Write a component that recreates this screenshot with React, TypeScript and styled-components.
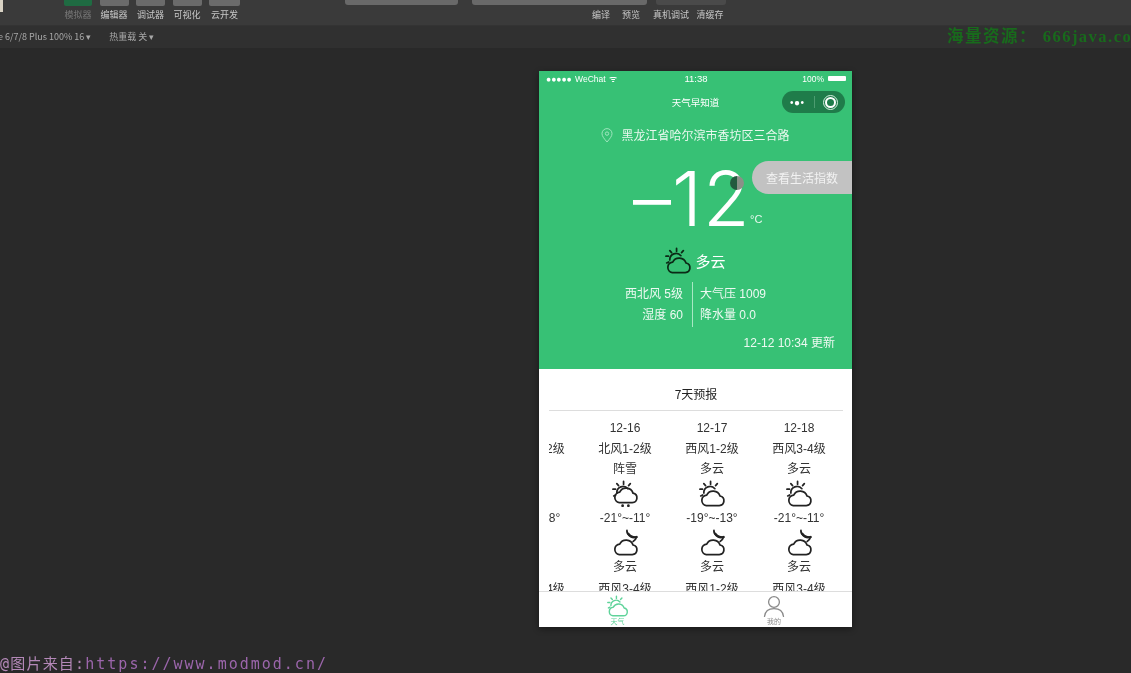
import styled, { createGlobalStyle } from 'styled-components';

const GlobalStyle = createGlobalStyle`
  html, body {
    margin: 0;
    padding: 0;
    width: 100%;
    height: 100%;
    overflow: hidden;
    background: #292929;
  }
`;

const CJK = `'Noto Sans CJK SC', 'Liberation Sans', sans-serif`;

const leftTools = [
  { label: '模拟器', width: 28, active: true },
  { label: '编辑器', width: 29 },
  { label: '调试器', width: 29 },
  { label: '可视化', width: 29 },
  { label: '云开发', width: 31 },
];

const rightTools = [
  { label: '编译', width: 30 },
  { label: '预览', width: 30 },
  { label: '真机调试', width: 50 },
  { label: '清缓存', width: 28 },
];

const forecast = [
  { date: '', wind: '西风1-2级', weather: '', temp: '-18°~-8°', night: '', nightWind: '西风3-4级', icon: 'none' },
  { date: '12-16', wind: '北风1-2级', weather: '阵雪', temp: '-21°~-11°', night: '多云', nightWind: '西风3-4级', icon: 'snow' },
  { date: '12-17', wind: '西风1-2级', weather: '多云', temp: '-19°~-13°', night: '多云', nightWind: '西风1-2级', icon: 'sun' },
  { date: '12-18', wind: '西风3-4级', weather: '多云', temp: '-21°~-11°', night: '多云', nightWind: '西风3-4级', icon: 'sun' },
];

const CLOUD = 'M7.5 26.5H21a5 5 0 0 0 .8-9.9A7.5 7.5 0 0 0 8 15.6a5.5 5.5 0 0 0-.5 10.9z';

function CloudSun({ size, color, snow }: { size: number; color: string; snow?: boolean }) {
  return (
    <svg width={size} height={size} viewBox="0 0 28 28" fill="none" stroke={color} strokeWidth="1.8" strokeLinecap="round" strokeLinejoin="round">
      <path d="M5 13.5a6.5 6.5 0 0 1 11.5-4.5" />
      <path d="M12 1.5v2.8M5 3.8l1.8 2M19 3.8l-1.8 2M1 9.5h2.6M1.8 16.5l2-1" />
      <path d={CLOUD} transform={snow ? 'translate(0 -3)' : undefined} />
      {snow && <path d="M11 26.5v.3M17 26.5v.3" strokeWidth="2.8" />}
    </svg>
  );
}

function CloudMoon({ size }: { size: number }) {
  return (
    <svg width={size} height={size} viewBox="0 0 28 28" fill="none" stroke="#222" strokeWidth="1.8" strokeLinecap="round" strokeLinejoin="round">
      <path d={CLOUD} />
      <path d="M15.5 1.5c-.4 3.8 3.2 7.5 10 6.8-.6 2-1.700 3.600-3.600 4.600" />
      <path d="M17 5c1.800 3 4.500 4.400 8.500 3.300" strokeWidth="2.400" />
    </svg>
  );
}

export default function App() {
  return (
    <Page>
      <GlobalStyle />
      <Toolbar>
        <ToolGroup>
          {leftTools.map(tool => (
            <Tool key={tool.label} $width={tool.width}>
              <ToolTile $active={tool.active} />
              <ToolLabel $muted={tool.active}>{tool.label}</ToolLabel>
            </Tool>
          ))}
        </ToolGroup>
        <Selects>
          <SelectBox $width={113} />
          <SelectBox $width={175} />
          <SelectBox $width={70} $dark />
        </Selects>
        <RightLabels>
          {rightTools.map(tool => (
            <RightLabel key={tool.label} $width={tool.width}>{tool.label}</RightLabel>
          ))}
        </RightLabels>
      </Toolbar>
      <SubBar>
        <SubItem>e 6/7/8 Plus 100% 16 ▾</SubItem>
        <SubItem>热重载 关 ▾</SubItem>
      </SubBar>
      <Watermark>海量资源： 666java.com</Watermark>
      <Stage>
        <Phone>
          <Hero>
            <StatusBar>
              <StatusSide>●●●●● WeChat ᯤ</StatusSide>
              <StatusTime>11:38</StatusTime>
              <StatusRight>
                100%
                <Battery />
              </StatusRight>
            </StatusBar>
            <NavBar>
              天气早知道
              <Capsule>
                <CapsuleDots>•●•</CapsuleDots>
                <CapsuleLine />
                <CapsuleRing />
              </Capsule>
            </NavBar>
            <Location>
              <svg width="12" height="15" viewBox="0 0 12 15" fill="none" stroke="#a8e8c4" strokeWidth="0.9">
                <path d="M6 14C3 10.500 1 8.200 1 5.600a5 5 0 0 1 10 0C11 8.200 9 10.500 6 14z" />
                <circle cx="6" cy="5.600" r="1.700" />
              </svg>
              <LocationText>黑龙江省哈尔滨市香坊区三合路</LocationText>
            </Location>
            <TempRow>
              <TempValue>–12</TempValue>
              <TempUnit>°C</TempUnit>
              <TouchDot />
              <IndexButton>查看生活指数</IndexButton>
            </TempRow>
            <WeatherRow>
              <CloudSun size={27} color="#0b2a16" />
              <WeatherName>多云</WeatherName>
            </WeatherRow>
            <Details>
              <DetailCol $right>
                <span>西北风 5级</span>
                <span>湿度 60</span>
              </DetailCol>
              <DetailCol>
                <span>大气压 1009</span>
                <span>降水量 0.0</span>
              </DetailCol>
            </Details>
            <Updated>12-12 10:34 更新</Updated>
          </Hero>
          <ForecastPanel>
            <ForecastTitle>7天预报</ForecastTitle>
            <Scroller>
              <Track>
                {forecast.map((day, i) => (
                  <DayCol key={i}>
                    <DayText>{day.date || '\u00a0'}</DayText>
                    <DayText>{day.wind}</DayText>
                    <DayText>{day.weather || '\u00a0'}</DayText>
                    <IconSlot>
                      {day.icon !== 'none' && <CloudSun size={27} color="#222" snow={day.icon === 'snow'} />}
                    </IconSlot>
                    <DayText>{day.temp}</DayText>
                    <IconSlot>{day.icon !== 'none' && <CloudMoon size={27} />}</IconSlot>
                    <DayText>{day.night || '\u00a0'}</DayText>
                    <LastLine>{day.nightWind}</LastLine>
                  </DayCol>
                ))}
              </Track>
            </Scroller>
          </ForecastPanel>
          <TabBar>
            <TabItem $active>
              <CloudSun size={22} color="#5fd39a" />
              <TabLabel>天气</TabLabel>
            </TabItem>
            <TabItem>
              <svg width="22" height="22" viewBox="0 0 22 22" fill="none" stroke="#8a8a8a" strokeWidth="1.300" strokeLinecap="round">
                <circle cx="11" cy="7" r="5.400" />
                <path d="M1.500 21.500c.6-5 4-7.800 9.500-7.800s8.900 2.800 9.500 7.800" />
              </svg>
              <TabLabel>我的</TabLabel>
            </TabItem>
          </TabBar>
        </Phone>
      </Stage>
      <SourceMark>
        <SourcePrefix>@图片来自:</SourcePrefix>
        <SourceUrl>https://www.modmod.cn/</SourceUrl>
      </SourceMark>
    </Page>
  );
}

const Page = styled.div`
  position: relative;
  display: flex;
  flex-direction: column;
  width: 1131px;
  height: 673px;
  overflow: hidden;
  background: #292929;
  font-family: ${CJK};
  filter: blur(0.45px);
`;

const Toolbar = styled.div`
  position: relative;
  flex: none;
  display: flex;
  height: 25px;
  padding-left: 64px;
  background: #3a3a3a;
  border-bottom: 1px solid #333;
  &::before {
    content: '';
    position: absolute;
    top: 0;
    left: 0;
    width: 3px;
    height: 12px;
    background: #d8d2c4;
  }
`;

const ToolGroup = styled.div`
  display: flex;
  gap: 7.5px;
`;

const Tool = styled.div<{ $width: number }>`
  display: flex;
  flex-direction: column;
  align-items: center;
  width: ${props => props.$width}px;
`;

const ToolTile = styled.div<{ $active?: boolean }>`
  width: 100%;
  height: 6px;
  border-radius: 0 0 2px 2px;
  background: ${props => (props.$active ? '#1f6b42' : '#6b6b6b')};
`;

const ToolLabel = styled.span<{ $muted?: boolean }>`
  margin-top: 3px;
  font-size: 9px;
  line-height: 12px;
  white-space: nowrap;
  color: ${props => (props.$muted ? '#777' : '#c8c8c8')};
`;

const Selects = styled.div`
  display: flex;
  align-items: flex-start;
  gap: 14px;
  margin-left: 105px;
`;

const SelectBox = styled.div<{ $width: number; $dark?: boolean }>`
  width: ${props => props.$width}px;
  height: 5px;
  border-radius: 0 0 3px 3px;
  background: ${props => (props.$dark ? '#4a4a4a' : '#696969')};
  &:last-child {
    margin-left: -5px;
  }
`;

const RightLabels = styled.div`
  position: absolute;
  top: 9px;
  left: 586px;
  display: flex;
`;

const RightLabel = styled.span<{ $width: number }>`
  width: ${props => props.$width}px;
  font-size: 9px;
  line-height: 12px;
  text-align: center;
  white-space: nowrap;
  color: #c8c8c8;
`;

const SubBar = styled.div`
  flex: none;
  display: flex;
  align-items: center;
  gap: 18px;
  height: 22px;
  padding-bottom: 2px;
  box-sizing: border-box;
  margin-left: -2px;
  background: #303030;
`;

const SubItem = styled.span`
  font-size: 9px;
  white-space: nowrap;
  color: #a8a8a8;
`;

const Watermark = styled.div`
  position: absolute;
  top: 26px;
  left: 947px;
  font-family: 'Liberation Serif', 'Noto Sans CJK SC', serif;
  font-size: 16.5px;
  font-weight: 700;
  letter-spacing: 1.5px;
  line-height: 22px;
  white-space: nowrap;
  color: #186a1c;
`;

const Stage = styled.div`
  flex: 1;
  padding: 23px 0 0 539px;
`;

const Phone = styled.div`
  display: flex;
  flex-direction: column;
  width: 313px;
  height: 556px;
  overflow: hidden;
  background: #fff;
  box-shadow: 0 2px 6px rgba(0, 0, 0, 0.4);
`;

const Hero = styled.div`
  flex: none;
  display: flex;
  flex-direction: column;
  height: 298px;
  background: #37c175;
  color: #fff;
`;

const StatusBar = styled.div`
  display: grid;
  grid-template-columns: 1fr auto 1fr;
  align-items: center;
  height: 15px;
  padding: 0 6px 0 7px;
  font-family: 'Liberation Sans', sans-serif;
  font-size: 8.5px;
`;

const StatusSide = styled.span`
  white-space: nowrap;
  word-spacing: 1px;
`;

const StatusTime = styled.span`
  font-size: 9.5px;
`;

const StatusRight = styled.span`
  display: flex;
  justify-content: flex-end;
  align-items: center;
  gap: 4px;
`;

const Battery = styled.i`
  width: 18px;
  height: 5px;
  border-radius: 1px;
  background: #fff;
`;

const NavBar = styled.div`
  position: relative;
  display: flex;
  justify-content: center;
  align-items: center;
  height: 32px;
  font-size: 9.5px;
`;

const Capsule = styled.div`
  position: absolute;
  top: 5px;
  right: 7px;
  display: flex;
  align-items: center;
  justify-content: space-between;
  width: 63px;
  height: 22px;
  padding: 0 8px;
  box-sizing: border-box;
  border-radius: 11px;
  background: #1f7c4a;
`;

const CapsuleDots = styled.span`
  font-family: 'Liberation Sans', sans-serif;
  font-size: 10px;
  letter-spacing: 0.5px;
`;

const CapsuleLine = styled.i`
  width: 1px;
  height: 12px;
  background: #4c9c70;
`;

const CapsuleRing = styled.i`
  width: 7px;
  height: 7px;
  border: 2px solid #fff;
  outline: 1px solid #d6f0e0;
  outline-offset: 1px;
  border-radius: 50%;
  background: #1f7c4a;
  margin-right: 1px;
`;

const Location = styled.div`
  display: flex;
  align-items: center;
  justify-content: center;
  gap: 8px;
  height: 36px;
  margin-top: -1px;
`;

const LocationText = styled.span`
  font-size: 12px;
  line-height: 14px;
  color: #e8f8ee;
`;

const TempRow = styled.div`
  position: relative;
  height: 78px;
  margin-top: 8px;
`;

const TempValue = styled.div`
  position: absolute;
  top: -8px;
  left: 94px;
  font-family: Inter, Roboto, 'Liberation Sans', sans-serif;
  font-size: 76px;
  font-weight: 300;
  letter-spacing: 1px;
  line-height: 90px;
  white-space: nowrap;
`;

const TempUnit = styled.span`
  position: absolute;
  top: 52px;
  left: 211px;
  font-family: 'Liberation Sans', sans-serif;
  font-size: 11px;
  color: #e8f8ee;
`;

const TouchDot = styled.i`
  position: absolute;
  top: 15px;
  left: 191px;
  width: 14px;
  height: 14px;
  border-radius: 50%;
  background: linear-gradient(90deg, #235a3f 50%, #8a9088 50%);
`;

const IndexButton = styled.div`
  position: absolute;
  top: 0;
  right: 0;
  display: flex;
  align-items: center;
  justify-content: center;
  width: 100px;
  height: 33px;
  border-radius: 17px 0 0 17px;
  background: #c2c2c2;
  font-size: 12px;
  color: #f2f2f2;
`;

const WeatherRow = styled.div`
  display: flex;
  align-items: center;
  justify-content: center;
  gap: 3px;
  height: 28px;
  margin-top: 7px;
`;

const WeatherName = styled.span`
  font-size: 15px;
`;

const Details = styled.div`
  display: grid;
  grid-template-columns: 153px 1fr;
  margin-top: 8px;
  font-family: 'Liberation Sans', 'Noto Sans CJK SC', sans-serif;
  font-size: 12px;
  line-height: 20.5px;
  color: #eef9f2;
`;

const DetailCol = styled.div<{ $right?: boolean }>`
  display: flex;
  flex-direction: column;
  height: 45px;
  justify-content: center;
  text-align: ${props => (props.$right ? 'right' : 'left')};
  padding: ${props => (props.$right ? '0 9px 0 0' : '0 0 0 7px')};
  border-left: ${props => (props.$right ? 'none' : '1px solid #a8e8c4')};
`;

const Updated = styled.div`
  margin-top: 7px;
  padding-right: 17px;
  text-align: right;
  font-family: 'Liberation Sans', 'Noto Sans CJK SC', sans-serif;
  font-size: 12px;
  line-height: 18px;
  color: #eef9f2;
`;

const ForecastPanel = styled.div`
  flex: 1;
  min-height: 0;
  display: flex;
  flex-direction: column;
  padding: 0 9px 0 10px;
  overflow: hidden;
`;

const ForecastTitle = styled.div`
  flex: none;
  height: 41px;
  line-height: 50px;
  text-align: center;
  font-size: 12px;
  color: #222;
  border-bottom: 1px solid #ddd;
  margin-bottom: 7px;
  box-sizing: content-box;
`;

const Scroller = styled.div`
  flex: 1;
  min-height: 0;
  overflow: hidden;
`;

const Track = styled.div`
  display: flex;
  margin-left: -54.5px;
`;

const DayCol = styled.div`
  flex: none;
  width: 87px;
  display: flex;
  flex-direction: column;
  align-items: center;
`;

const DayText = styled.div`
  height: 20.5px;
  line-height: 20px;
  font-family: 'Liberation Sans', 'Noto Sans CJK SC', sans-serif;
  font-size: 12px;
  white-space: nowrap;
  color: #333;
`;

const LastLine = styled(DayText)`
  margin-top: 1px;
`;

const IconSlot = styled.div`
  display: flex;
  align-items: center;
  justify-content: center;
  height: 28.5px;
`;

const TabBar = styled.div`
  flex: none;
  display: grid;
  grid-template-columns: 157px 1fr;
  height: 36px;
  box-sizing: border-box;
  border-top: 1px solid #ddd;
  background: #fff;
`;

const TabItem = styled.div<{ $active?: boolean }>`
  display: flex;
  flex-direction: column;
  align-items: center;
  padding-top: 3px;
  color: ${props => (props.$active ? '#5fd39a' : '#888')};
`;

const TabLabel = styled.span`
  font-size: 7px;
  line-height: 9px;
`;

const SourceMark = styled.div`
  position: absolute;
  left: 0;
  bottom: 0;
  font-family: 'DejaVu Sans Mono', 'Noto Sans CJK SC', monospace;
  font-size: 15px;
  line-height: 18px;
  white-space: nowrap;
`;

const SourcePrefix = styled.span`
  letter-spacing: 1.2px;
  color: #b488b8;
`;

const SourceUrl = styled.span`
  letter-spacing: 2px;
  color: #9c66ac;
`;
